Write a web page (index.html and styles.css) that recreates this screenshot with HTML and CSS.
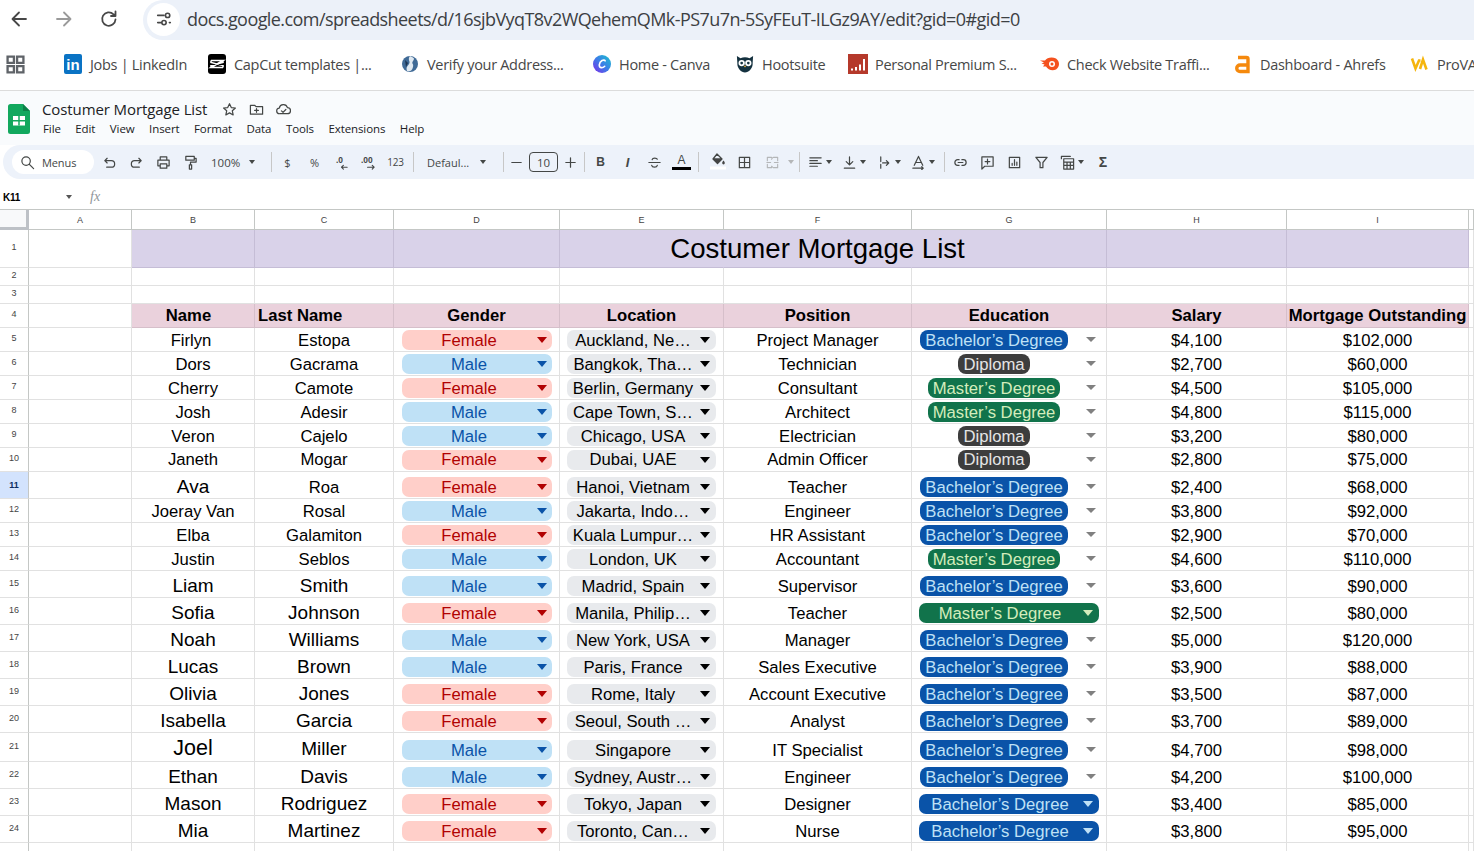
FILE: index.html
```html
<!DOCTYPE html>
<html lang="en">
<head>
<meta charset="utf-8">
<title>Costumer Mortgage List</title>
<link rel="stylesheet" href="styles.css">
</head>
<body>
<header class="nav">
  <svg class="nav-ico" viewBox="0 0 20 20"><path d="M17 10H4M10 3.500L3.500 10l6.500 6.500" class="st-d"/></svg>
  <svg class="nav-ico fwd" viewBox="0 0 20 20"><path d="M3 10h13M10 3.500l6.500 6.500-6.500 6.500" class="st-l"/></svg>
  <svg class="nav-ico rel" viewBox="0 0 20 20"><path d="M16.500 10.500a6.700 6.700 0 1 1-2-5.200L16.500 7M16.500 2.500V7H12" class="st-d"/></svg>
  <div class="addr">
    <span class="site"><svg viewBox="0 0 20 20" width="18" height="18"><path d="M3 6h7M3 14h4M16 14h1" class="st-d"/><circle cx="14" cy="6" r="2.400" class="st-d"/><circle cx="10" cy="14" r="2.400" class="st-d"/></svg></span>
    <span class="url">docs.google.com/spreadsheets/d/16sjbVyqT8v2WQehemQMk-PS7u7n-5SyFEuT-ILGz9AY/edit?gid=0#gid=0</span>
  </div>
</header>
<nav class="marks">
  <svg class="apps" viewBox="0 0 18 18"><path d="M1.500 1.500h6v6h-6zM10.500 1.500h6v6h-6zM1.500 10.500h6v6h-6zM10.500 10.500h6v6h-6z" class="st-a"/></svg>
  <span class="mark-sep"></span>
  <div class="mark-grid">
    <a class="mark"><span class="li">in</span>Jobs | LinkedIn</a>
    <a class="mark"><svg class="mi" viewBox="0 0 18 20"><rect width="18" height="20" rx="3" fill="#000"/><path d="M3 6.500h12L3 13.500h12M3 6.500v2L15 11.500v2M15 6.500v2L3 11.500v2" fill="none" stroke="#fff" stroke-width="1.600"/></svg>CapCut templates |...</a>
    <a class="mark"><svg class="mi" viewBox="0 0 18 20"><circle cx="9" cy="10" r="8" fill="#3f6a96"/><path d="M9 2c-3 4 1 5-1 8s-3 3-2 7c3 1 5 0 6-4s-2-3 0-6 1-3-3-5z" fill="#dfe8f0"/><path d="M4 6l3 3-2 4z" fill="#1c3552"/></svg>Verify your Address...</a>
    <a class="mark"><svg class="mi" viewBox="0 0 20 20"><defs><linearGradient id="cv" x1="0" y1="1" x2="1" y2="0"><stop offset="0" stop-color="#7d2ae8"/><stop offset=".5" stop-color="#3c7de8"/><stop offset="1" stop-color="#19c4cc"/></linearGradient></defs><circle cx="10" cy="10" r="10" fill="url(#cv)"/><path d="M13.500 6.500c-1-2-6-.5-6.500 4.500-.3 3.500 3.500 4 6 1.500" fill="none" stroke="#fff" stroke-width="1.800" stroke-linecap="round"/></svg>Home - Canva</a>
    <a class="mark"><svg class="mi" viewBox="0 0 20 20"><path d="M1 1l4 2.500c3-1.500 7-1.500 10 0L19 1l-.5 8c.5 6-4.500 10.500-8.500 10.500S1 15 1.500 9z" fill="#14313f"/><circle cx="6.300" cy="9" r="3.500" fill="#fff"/><circle cx="13.700" cy="9" r="3.500" fill="#fff"/><circle cx="6.300" cy="9" r="1.500" fill="#14313f"/><circle cx="13.700" cy="9" r="1.500" fill="#14313f"/><path d="M8.500 12h3L10 14z" fill="#f4b942"/></svg>Hootsuite</a>
    <a class="mark"><svg class="mi wide" viewBox="0 0 20 20"><rect width="20" height="20" fill="#b5392b"/><path d="M4 16.500v-2M8 16.500v-3.500M12 16.500v-6M16 16.500V5" stroke="#fff" stroke-width="2" fill="none"/></svg>Personal Premium S...</a>
    <a class="mark"><svg class="mi wide" viewBox="0 0 20 14"><path d="M0 3.500h5c2-3 7-4 11-2 4 3 4 8 0 11-4 2-8 0-10-3H3l1.500-2-3-1 2.500-1z" fill="#f4511e"/><circle cx="12" cy="7" r="3" fill="#fff"/><circle cx="12" cy="7" r="1.500" fill="#f4511e"/></svg>Check Website Traffi...</a>
    <a class="mark"><svg class="mi ah" viewBox="0 0 16 20"><path d="M3 3.500h8.500a1.500 1.500 0 0 1 1.500 1.500v12.500H5a3 3 0 0 1 0-6.500h8" fill="none" stroke="#f5890d" stroke-width="3.400"/></svg>Dashboard - Ahrefs</a>
    <a class="mark"><svg class="mi wide" viewBox="0 0 20 16"><path d="M2 2.500l3.500 10 3.500-8 1.500 0M10 13l3-9.500 3.500 10" fill="none" stroke="#f5b50d" stroke-width="2.600"/></svg>ProVA</a>
  </div>
</nav>
<section class="doc">
  <svg class="logo" viewBox="0 0 22 30"><path d="M2.500 0H15l7 7v20.500A2.500 2.500 0 0 1 19.500 30h-17A2.500 2.500 0 0 1 0 27.500v-25A2.500 2.500 0 0 1 2.500 0z" fill="#12a85e"/><path d="M15 0l7 7h-7z" fill="#0d8049"/><rect x="5" y="12" width="12" height="9.500" fill="#fff"/><path d="M5 16.800h12M11 12v9.500" fill="none" stroke="#12a85e" stroke-width="1.500"/></svg>
  <div class="doc-body">
    <div class="doc-title">
      <span class="title-text">Costumer Mortgage List</span>
      <svg class="t-ico first" viewBox="0 0 16 16"><path d="M8 1.800l1.900 4.100 4.400.5-3.300 3 .9 4.400L8 11.600l-3.900 2.200.9-4.400-3.300-3 4.400-.5z" class="st-t"/></svg>
      <svg class="t-ico" viewBox="0 0 16 16"><path d="M1.500 3.500h4.500l1.500 1.500h7v8h-13zM8 7v4M6 9h4" class="st-t"/></svg>
      <svg class="t-ico" viewBox="0 0 16 16"><path d="M4 12.500a3 3 0 0 1-.5-6 4.500 4.500 0 0 1 8.700-.5 3.200 3.200 0 0 1 0 6.500zM5.800 9.500L7.500 11l3-3" class="st-t"/></svg>
    </div>
    <div class="menu"><span>File</span><span>Edit</span><span>View</span><span>Insert</span><span>Format</span><span>Data</span><span>Tools</span><span>Extensions</span><span>Help</span></div>
  </div>
</section>
<section class="toolbar">
  <div class="search"><svg viewBox="0 0 16 16" width="15" height="15"><circle cx="6.500" cy="6.500" r="4.500" class="st-t"/><path d="M10 10l4.500 4.500" class="st-t"/></svg><span>Menus</span></div>
  <span class="tool"><svg viewBox="0 0 16 16"><path d="M5.500 3.500L3 6l2.500 2.500M3 6h7a3 3 0 0 1 0 7H5" class="st-t"/></svg></span>
  <span class="tool"><svg viewBox="0 0 16 16"><path d="M10.500 3.500L13 6l-2.500 2.500M13 6H6a3 3 0 0 0 0 7h5" class="st-t"/></svg></span>
  <span class="tool"><svg viewBox="0 0 16 16"><path d="M4.500 5V2h7v3M4.500 11.500H2V5.500h12v6h-2.500M4.500 9.500h7V14h-7z" class="st-t"/></svg></span>
  <span class="tool"><svg viewBox="0 0 16 16"><path d="M3 1.500h9v4H3zM12 3.500h2v4H8v3M6.800 10.500h2.400v4.500H6.800z" class="st-t"/></svg></span>
  <span class="zoom">100%<i class="caret"></i></span>
  <span class="sep s1"></span>
  <span class="tool tx">$</span><span class="tool tx">%</span>
  <span class="tool"><svg viewBox="0 0 16 16"><text x="2" y="9" class="dec">.0</text><path d="M14 13H8M10 11l-2 2 2 2" class="st-s"/></svg></span>
  <span class="tool"><svg viewBox="0 0 16 16"><text x="0" y="9" class="dec">.00</text><path d="M7 13h7M12 11l2 2-2 2" class="st-s"/></svg></span>
  <span class="tool tx small">123</span>
  <span class="sep s2"></span>
  <span class="font-pick">Defaul...<i class="caret"></i></span>
  <span class="sep s3"></span>
  <span class="tool t-minus"><svg viewBox="0 0 16 16"><path d="M3 8h10" class="st-t"/></svg></span>
  <span class="size">10</span>
  <span class="tool t-plus"><svg viewBox="0 0 16 16"><path d="M3 8h10M8 3v10" class="st-t"/></svg></span>
  <span class="sep s4"></span>
  <span class="tool tx bold">B</span>
  <span class="tool tx ital">I</span>
  <span class="tool"><svg viewBox="0 0 16 16"><path d="M2 8h12M11 4.500C10.500 3 6 2.500 5.500 5M5 11c.5 2.500 5.500 2.500 6 0" class="st-t"/></svg></span>
  <span class="tool"><span class="col-a">A</span></span>
  <span class="sep s5"></span>
  <span class="tool fill"><svg viewBox="0 0 16 18"><path d="M7 2l5 5-4.500 4.500L3 7zM3 7h9" class="st-t"/><path d="M3 7h9l-4.500 4.500z" fill="#444"/><path d="M13.500 8.500c1 1.300 1.300 2 1.300 2.600a1.300 1.300 0 0 1-2.600 0c0-.6.300-1.300 1.300-2.600z" fill="#444"/><path d="M0 16h16" stroke="#fff" stroke-width="3"/></svg></span>
  <span class="tool"><svg viewBox="0 0 16 16"><path d="M2.500 2.500h11v11h-11zM8 2.500v11M2.500 8h11" class="st-t"/></svg></span>
  <span class="tool merge"><svg viewBox="0 0 16 16"><path d="M2.500 6V2.500H7M9 2.500h4.500V6M2.500 10v3.500H7M9 13.500h4.500V10M2 8h4M10 8h4M7 4.500L8 3M7 12l1 1" class="st-g"/></svg></span>
  <i class="caret pale"></i>
  <span class="sep s6"></span>
  <span class="split"><svg viewBox="0 0 16 16"><path d="M2 3h12M2 6h8M2 9h12M2 12h8" class="st-t"/></svg><i class="caret"></i></span>
  <span class="split"><svg viewBox="0 0 16 16"><path d="M8 2v8M4.500 7L8 10.500 11.500 7M2.500 14h11" class="st-t"/></svg><i class="caret"></i></span>
  <span class="split"><svg viewBox="0 0 16 16"><path d="M4 2v5M4 10v4M6 8.500h6M10 6l2.500 2.500L10 11" class="st-t"/></svg><i class="caret"></i></span>
  <span class="split"><svg viewBox="0 0 16 16"><path d="M3.500 11L8 1.500 12.500 11M5 8h6M2 14h11M11.500 12.500L13 14l-1.500 1.500" class="st-t"/></svg><i class="caret"></i></span>
  <span class="sep s7"></span>
  <span class="tool"><svg viewBox="0 0 16 16"><path d="M6.500 5H5a3 3 0 0 0 0 6h1.500M9.500 5H11a3 3 0 0 1 0 6H9.500M5.500 8h5" class="st-t"/></svg></span>
  <span class="tool"><svg viewBox="0 0 16 16"><path d="M2 2h12v10H5l-3 3zM8 4.500v5M5.500 7h5" class="st-t"/></svg></span>
  <span class="tool"><svg viewBox="0 0 16 16"><path d="M2.500 2.500h11v11h-11zM5.500 11V9M8 11V5M10.500 11V7.500" class="st-t"/></svg></span>
  <span class="tool"><svg viewBox="0 0 16 16"><path d="M2 2.500h12L9.500 8v5.500h-3V8z" class="st-t"/></svg></span>
  <span class="split"><svg viewBox="0 0 16 16"><path d="M1.500 4V1.500H11M4 4h10.500v11H4zM4 7.500h10.500M7.500 7.500V15M11 7.500V15M4 11h10.500" class="st-t"/></svg><i class="caret"></i></span>
  <span class="tool sigma">Σ</span>
</section>
<section class="fbar">
  <span class="cellref">K11</span><i class="caret dark"></i><span class="fx">fx</span>
</section>
<main class="sheet">
  <div class="row colhead"><div class="corner"></div><div>A</div><div>B</div><div>C</div><div>D</div><div>E</div><div>F</div><div>G</div><div>H</div><div>I</div><div></div></div>
  <div class="row h38 band-title"><div class="rh">1</div><div class="c"></div><div class="c b"></div><div class="c b"></div><div class="c b"></div><div class="c b nr"></div><div class="c b nr title">Costumer Mortgage List</div><div class="c b"></div><div class="c b"></div><div class="c b"></div><div class="c"></div></div>
  <div class="row h18"><div class="rh">2</div><div class="c"></div><div class="c"></div><div class="c"></div><div class="c"></div><div class="c"></div><div class="c"></div><div class="c"></div><div class="c"></div><div class="c"></div><div class="c"></div></div>
  <div class="row h18"><div class="rh">3</div><div class="c"></div><div class="c"></div><div class="c"></div><div class="c"></div><div class="c"></div><div class="c"></div><div class="c"></div><div class="c"></div><div class="c"></div><div class="c"></div></div>
  <div class="row h24 band-head"><div class="rh">4</div><div class="c"></div><div class="c b off-name">Name</div><div class="c b left">Last Name</div><div class="c b">Gender</div><div class="c b">Location</div><div class="c b">Position</div><div class="c b">Education</div><div class="c b">Salary</div><div class="c b">Mortgage Outstanding</div><div class="c"></div></div>

  <div class="row h24"><div class="rh">5</div><div class="c"></div><div class="c off-first">Firlyn</div><div class="c">Estopa</div><div class="c"><span class="pill fem">Female<i></i></span></div><div class="c"><span class="pill loc">Auckland, Ne…<i></i></span></div><div class="c">Project Manager</div><div class="c edu"><span class="bub ba">Bachelor’s Degree</span><i></i></div><div class="c">$4,100</div><div class="c">$102,000</div><div class="c"></div></div>
  <div class="row h24"><div class="rh">6</div><div class="c"></div><div class="c">Dors</div><div class="c">Gacrama</div><div class="c"><span class="pill mal">Male<i></i></span></div><div class="c"><span class="pill loc">Bangkok, Tha…<i></i></span></div><div class="c">Technician</div><div class="c edu"><span class="bub di">Diploma</span><i></i></div><div class="c">$2,700</div><div class="c">$60,000</div><div class="c"></div></div>
  <div class="row h24"><div class="rh">7</div><div class="c"></div><div class="c">Cherry</div><div class="c">Camote</div><div class="c"><span class="pill fem">Female<i></i></span></div><div class="c"><span class="pill loc">Berlin, Germany<i></i></span></div><div class="c">Consultant</div><div class="c edu"><span class="bub ma">Master’s Degree</span><i></i></div><div class="c">$4,500</div><div class="c">$105,000</div><div class="c"></div></div>
  <div class="row h24"><div class="rh">8</div><div class="c"></div><div class="c">Josh</div><div class="c">Adesir</div><div class="c"><span class="pill mal">Male<i></i></span></div><div class="c"><span class="pill loc">Cape Town, S…<i></i></span></div><div class="c">Architect</div><div class="c edu"><span class="bub ma">Master’s Degree</span><i></i></div><div class="c">$4,800</div><div class="c">$115,000</div><div class="c"></div></div>
  <div class="row h24"><div class="rh">9</div><div class="c"></div><div class="c">Veron</div><div class="c">Cajelo</div><div class="c"><span class="pill mal">Male<i></i></span></div><div class="c"><span class="pill loc">Chicago, USA<i></i></span></div><div class="c">Electrician</div><div class="c edu"><span class="bub di">Diploma</span><i></i></div><div class="c">$3,200</div><div class="c">$80,000</div><div class="c"></div></div>
  <div class="row h24 raised"><div class="rh">10</div><div class="c"></div><div class="c">Janeth</div><div class="c">Mogar</div><div class="c"><span class="pill fem">Female<i></i></span></div><div class="c"><span class="pill loc">Dubai, UAE<i></i></span></div><div class="c">Admin Officer</div><div class="c edu"><span class="bub di">Diploma</span><i></i></div><div class="c">$2,800</div><div class="c">$75,000</div><div class="c"></div></div>
  <div class="row h27"><div class="rh sel">11</div><div class="c"></div><div class="c big">Ava</div><div class="c">Roa</div><div class="c"><span class="pill fem">Female<i></i></span></div><div class="c"><span class="pill loc">Hanoi, Vietnam<i></i></span></div><div class="c">Teacher</div><div class="c edu"><span class="bub ba">Bachelor’s Degree</span><i></i></div><div class="c">$2,400</div><div class="c">$68,000</div><div class="c"></div></div>
  <div class="row h24"><div class="rh">12</div><div class="c"></div><div class="c">Joeray Van</div><div class="c">Rosal</div><div class="c"><span class="pill mal">Male<i></i></span></div><div class="c"><span class="pill loc">Jakarta, Indo…<i></i></span></div><div class="c">Engineer</div><div class="c edu"><span class="bub ba">Bachelor’s Degree</span><i></i></div><div class="c">$3,800</div><div class="c">$92,000</div><div class="c"></div></div>
  <div class="row h24"><div class="rh">13</div><div class="c"></div><div class="c">Elba</div><div class="c">Galamiton</div><div class="c"><span class="pill fem">Female<i></i></span></div><div class="c"><span class="pill loc">Kuala Lumpur…<i></i></span></div><div class="c">HR Assistant</div><div class="c edu"><span class="bub ba">Bachelor’s Degree</span><i></i></div><div class="c">$2,900</div><div class="c">$70,000</div><div class="c"></div></div>
  <div class="row h24"><div class="rh">14</div><div class="c"></div><div class="c">Justin</div><div class="c">Seblos</div><div class="c"><span class="pill mal">Male<i></i></span></div><div class="c"><span class="pill loc">London, UK<i></i></span></div><div class="c">Accountant</div><div class="c edu"><span class="bub ma">Master’s Degree</span><i></i></div><div class="c">$4,600</div><div class="c">$110,000</div><div class="c"></div></div>
  <div class="row h27"><div class="rh">15</div><div class="c"></div><div class="c big">Liam</div><div class="c big">Smith</div><div class="c"><span class="pill mal">Male<i></i></span></div><div class="c"><span class="pill loc">Madrid, Spain<i></i></span></div><div class="c">Supervisor</div><div class="c edu"><span class="bub ba">Bachelor’s Degree</span><i></i></div><div class="c">$3,600</div><div class="c">$90,000</div><div class="c"></div></div>
  <div class="row h27"><div class="rh">16</div><div class="c"></div><div class="c big">Sofia</div><div class="c big">Johnson</div><div class="c"><span class="pill fem">Female<i></i></span></div><div class="c"><span class="pill loc">Manila, Philip…<i></i></span></div><div class="c">Teacher</div><div class="c"><span class="pill wide ma">Master’s Degree<i></i></span></div><div class="c">$2,500</div><div class="c">$80,000</div><div class="c"></div></div>
  <div class="row h27"><div class="rh">17</div><div class="c"></div><div class="c big">Noah</div><div class="c big">Williams</div><div class="c"><span class="pill mal">Male<i></i></span></div><div class="c"><span class="pill loc">New York, USA<i></i></span></div><div class="c">Manager</div><div class="c edu"><span class="bub ba">Bachelor’s Degree</span><i></i></div><div class="c">$5,000</div><div class="c">$120,000</div><div class="c"></div></div>
  <div class="row h27"><div class="rh">18</div><div class="c"></div><div class="c big">Lucas</div><div class="c big">Brown</div><div class="c"><span class="pill mal">Male<i></i></span></div><div class="c"><span class="pill loc">Paris, France<i></i></span></div><div class="c">Sales Executive</div><div class="c edu"><span class="bub ba">Bachelor’s Degree</span><i></i></div><div class="c">$3,900</div><div class="c">$88,000</div><div class="c"></div></div>
  <div class="row h27"><div class="rh">19</div><div class="c"></div><div class="c big">Olivia</div><div class="c big">Jones</div><div class="c"><span class="pill fem">Female<i></i></span></div><div class="c"><span class="pill loc">Rome, Italy<i></i></span></div><div class="c">Account Executive</div><div class="c edu"><span class="bub ba">Bachelor’s Degree</span><i></i></div><div class="c">$3,500</div><div class="c">$87,000</div><div class="c"></div></div>
  <div class="row h27"><div class="rh">20</div><div class="c"></div><div class="c big">Isabella</div><div class="c big">Garcia</div><div class="c"><span class="pill fem">Female<i></i></span></div><div class="c"><span class="pill loc">Seoul, South …<i></i></span></div><div class="c">Analyst</div><div class="c edu"><span class="bub ba">Bachelor’s Degree</span><i></i></div><div class="c">$3,700</div><div class="c">$89,000</div><div class="c"></div></div>
  <div class="row h29"><div class="rh">21</div><div class="c"></div><div class="c huge">Joel</div><div class="c big lift">Miller</div><div class="c"><span class="pill mal">Male<i></i></span></div><div class="c"><span class="pill loc">Singapore<i></i></span></div><div class="c">IT Specialist</div><div class="c edu"><span class="bub ba">Bachelor’s Degree</span><i></i></div><div class="c">$4,700</div><div class="c">$98,000</div><div class="c"></div></div>
  <div class="row h27"><div class="rh">22</div><div class="c"></div><div class="c big">Ethan</div><div class="c big">Davis</div><div class="c"><span class="pill mal">Male<i></i></span></div><div class="c"><span class="pill loc">Sydney, Austr…<i></i></span></div><div class="c">Engineer</div><div class="c edu"><span class="bub ba">Bachelor’s Degree</span><i></i></div><div class="c">$4,200</div><div class="c">$100,000</div><div class="c"></div></div>
  <div class="row h27"><div class="rh">23</div><div class="c"></div><div class="c big">Mason</div><div class="c big">Rodriguez</div><div class="c"><span class="pill fem">Female<i></i></span></div><div class="c"><span class="pill loc">Tokyo, Japan<i></i></span></div><div class="c">Designer</div><div class="c"><span class="pill wide ba">Bachelor’s Degree<i></i></span></div><div class="c">$3,400</div><div class="c">$85,000</div><div class="c"></div></div>
  <div class="row h27"><div class="rh">24</div><div class="c"></div><div class="c big">Mia</div><div class="c big">Martinez</div><div class="c"><span class="pill fem">Female<i></i></span></div><div class="c"><span class="pill loc">Toronto, Can…<i></i></span></div><div class="c">Nurse</div><div class="c"><span class="pill wide ba">Bachelor’s Degree<i></i></span></div><div class="c">$3,800</div><div class="c">$95,000</div><div class="c"></div></div>
  <div class="row h27"><div class="rh">25</div><div class="c"></div><div class="c"></div><div class="c"></div><div class="c"></div><div class="c"></div><div class="c"></div><div class="c"></div><div class="c"></div><div class="c"></div><div class="c"></div></div>
</main>
</body>
</html>
```
FILE: styles.css
```css
* { box-sizing: border-box; }
html, body { margin: 0; height: 851px; overflow: hidden; background: #fff; }
body { font-family: "Liberation Sans", Arial, sans-serif; color: #000; }
svg { display: block; flex: none; }
i { font-style: normal; }

.st-d, .st-l, .st-t, .st-s, .st-g, .st-a { fill: none; stroke-linecap: round; stroke-linejoin: round; }
.st-d { stroke: #474747; stroke-width: 1.8; }
.st-a { stroke: #5f6368; stroke-width: 2.2; stroke-linecap: butt; stroke-linejoin: miter; }
.st-l { stroke: #9a9a9a; stroke-width: 1.8; }
.st-t { stroke: #444746; stroke-width: 1.3; }
.st-s { stroke: #444746; stroke-width: 1.2; }
.st-g { stroke: #b4b6b8; stroke-width: 1.2; }

/* browser chrome */
.nav { height: 40px; display: flex; align-items: center; padding-left: 9px; background: #fff; }
.nav-ico { width: 20px; height: 20px; margin-top: -3px; }
.nav-ico.fwd { margin-left: 25px; }
.nav-ico.rel { margin-left: 25px; }
.addr { margin-left: 24px; flex: 1; height: 40px; background: #ecf1f9; border-radius: 20px 0 0 20px; display: flex; align-items: center; padding-left: 4px; }
.site { width: 33px; height: 33px; border-radius: 50%; background: #fff; display: flex; align-items: center; justify-content: center; margin-top: -2px; }
.url { margin-left: 7px; font: 18px "Open Sans", sans-serif; letter-spacing: -.57px; color: #3c4043; white-space: nowrap; margin-top: -3px; }

.marks { height: 51px; border-bottom: 1px solid #dcdcdc; display: flex; align-items: center; padding-left: 6px; padding-bottom: 2px; overflow: hidden; }
.apps { width: 19px; height: 19px; }
.mark-sep { width: 2px; height: 20px; background: #d3e0f3; margin-left: 19px; margin-right: 20px; }
.mark-grid { display: grid; grid-template-columns: 144px 193px 192px 143px 112px 192px 195px 175px 100px; }
.mark { display: flex; align-items: center; gap: 8px; font: 14.5px "Open Sans", sans-serif; letter-spacing: -.3px; color: #474747; white-space: nowrap; }
.mi { width: 18px; height: 20px; }
.mi.wide { width: 20px; margin-right: -1px; }
.mi.ah { width: 16px; margin-right: 1px; }
.li { width: 18px; height: 20px; background: #0a73c4; color: #fff; font: bold 15px "Liberation Sans", sans-serif; letter-spacing: 0; display: flex; align-items: flex-end; justify-content: center; border-radius: 2px; line-height: 18px; }

/* doc header */
.doc { height: 54px; background: #f9fbfd; display: flex; padding: 13px 0 0 8px; }
.logo { width: 22px; height: 30px; }
.doc-body { margin-left: 12px; margin-top: -4px; }
.doc-title { display: flex; align-items: center; height: 18px; }
.title-text { font: 15px "Open Sans", sans-serif; letter-spacing: -.1px; color: #202124; }
.t-ico { width: 15px; height: 15px; margin-left: 12px; }
.t-ico.first { margin-left: 15px; }
.menu { display: flex; gap: 14.5px; margin-top: 3px; padding-left: 1px; font: 11.5px "Open Sans", sans-serif; letter-spacing: -.1px; color: #202124; }

/* toolbar */
.toolbar { height: 34px; margin-left: 3px; background: #edf2fa; border-radius: 17px 0 0 17px; display: flex; align-items: center; padding-left: 9px; color: #444746; font-size: 11px; }
.search { width: 82px; height: 24px; background: #fff; border-radius: 12px; display: flex; align-items: center; padding-left: 8px; gap: 7px; font: 11px "Open Sans", sans-serif; letter-spacing: -.1px; margin-right: 2px; }
.tool { width: 27px; height: 24px; display: flex; align-items: center; justify-content: center; flex: none; }
.tool svg { width: 15px; height: 15px; }
.tool.fill svg { width: 16px; height: 18px; margin-top: -2px; }
.tool.tx { font: 11px "Open Sans", sans-serif; }
.tool.small { font-size: 10px; letter-spacing: -.3px; }
.tool.bold { font: bold 12px "Liberation Sans", sans-serif; }
.tool.ital { font: italic bold 13px "Liberation Sans", sans-serif; }
.tool.merge { margin-left: 1px; }
.dec { font: bold 9px "Liberation Sans", sans-serif; fill: #444746; }
.caret { display: block; width: 0; height: 0; border-left: 3.5px solid transparent; border-right: 3.5px solid transparent; border-top: 4px solid #444746; flex: none; }
.caret.pale { border-top-color: #b4b6b8; margin-left: 2px; }
.caret.dark { margin-left: 49px; border-top-color: #555; }
.zoom { width: 60px; display: flex; align-items: center; padding-left: 7px; font: 11.5px "Open Sans", sans-serif; }
.zoom .caret { margin-left: 9px; }
.font-pick { width: 84px; display: flex; align-items: center; padding-left: 13px; font: 11px "Open Sans", sans-serif; }
.font-pick .caret { margin-left: 11px; }
.sep { width: 1px; height: 20px; background: #c7c7c7; flex: none; }
.s1 { margin: 0 2px 0 7px; }
.s2 { margin-left: 4px; }
.s3 { margin: 0 0 0 5px; }
.s4 { margin: 0 2px 0 2px; }
.s5 { margin: 0 5px 0 3px; }
.s6 { margin: 0 3px 0 5px; }
.s7 { margin: 0 2px 0 4px; }
.tool.t-minus { width: 25px; }
.tool.t-plus { width: 24px; }
.size { width: 29px; height: 20px; border: 1px solid #444746; border-radius: 4px; display: flex; align-items: center; justify-content: center; font: 11.5px "Open Sans", sans-serif; flex: none; }
.col-a { width: 19px; border-bottom: 3px solid #000; font: 12px "Liberation Sans", sans-serif; text-align: center; line-height: 13px; }
.split { width: 34.3px; height: 24px; display: flex; align-items: center; justify-content: center; gap: 3px; flex: none; }
.split svg { width: 15px; height: 15px; }
.sigma { font: bold 14px "Liberation Sans", sans-serif; }

/* formula bar */
.fbar { height: 31px; padding: 6px 0 0 3px; display: flex; align-items: center; border-bottom: 1px solid #c4c7c5; }
.cellref { font: bold 10px "Liberation Sans", sans-serif; letter-spacing: -.3px; width: 14px; }
.fx { margin-left: 18px; font: italic 14px "Liberation Serif", serif; color: #8f959a; }

/* sheet */
.row { display: grid; grid-template-columns: 29px 103px 123px 139px 166px 164px 188px 195px 180px 182px 1fr; font-size: 16.67px; }
.colhead { height: 20px; font-size: 9px; color: #444; }
.colhead > div { display: flex; align-items: center; justify-content: center; border-right: 1px solid #c4c7c5; border-bottom: 1px solid #c4c7c5; }
.colhead .corner { background: #f8f9fa; border-right: 3px solid #bdc1c6; border-bottom: 3px solid #bdc1c6; }
.h18 { height: 18px; } .h24 { height: 24px; } .h27 { height: 27px; } .h29 { height: 29px; } .h38 { height: 38px; }
.rh { display: flex; align-items: center; justify-content: center; font-size: 9px; color: #444; border-right: 1px solid #c4c7c5; border-bottom: 1px solid #e1e1e1; padding-bottom: 3px; }
.rh.sel { background: #d3e3fd; font-weight: bold; color: #0b2e63; padding-bottom: 0; }
.c { display: flex; align-items: flex-end; justify-content: center; white-space: nowrap; line-height: 20px; border-right: 1px solid #e1e1e1; border-bottom: 1px solid #e1e1e1; min-width: 0; }
.c.left { justify-content: flex-start; padding-left: 3px; }
.off-name { padding-right: 9px; }
.off-first { padding-right: 4px; }
.big { font-size: 19px; padding-bottom: 1px; }
.big.lift { padding-bottom: 2px; }
.huge { font-size: 21.5px; padding-bottom: 3px; }
.raised .c { padding-bottom: 1px; }
.raised .pill, .raised .bub { margin-bottom: 0; padding-top: 0; line-height: 20px; }

.band-title .b { background: #d9d2e9; border-color: #c5bdd6; }
.band-title .nr { border-right-color: #d9d2e9; }
.title { font-size: 27.6px; align-items: center; padding-top: 1px; position: relative; z-index: 1; }
.band-head .b { background: #ead1dc; border-color: #d6bfca; font-weight: bold; padding-bottom: 1px; }

.pill { position: relative; height: 20px; width: 150px; border-radius: 7px; display: flex; align-items: center; justify-content: center; padding: 2px 16px 0 0; margin-bottom: 1px; flex: none; }
.pill i { position: absolute; right: 5px; top: 7px; width: 0; height: 0; border-left: 5.5px solid transparent; border-right: 5.5px solid transparent; border-top: 6px solid currentColor; }
.pill.fem { background: #ffcfc9; color: #b10202; margin-left: 1px; }
.pill.mal { background: #bfe1f6; color: #0a53a8; margin-left: 1px; }
.pill.loc { background: #e8eaed; color: #000; width: 149px; padding-right: 17px; }
.pill.loc i { right: 6px; }
.pill.wide { width: 180px; padding-right: 18px; }
.pill.wide.ma { background: #11734b; color: #d4edbc; }
.pill.wide.ba { background: #0a53a8; color: #bfe1f6; }
.pill.wide i { right: 6px; }

.edu { padding-right: 30px; position: relative; }
.bub { height: 20px; line-height: 22px; border-radius: 8px; padding: 0 5px; margin-bottom: 1px; }
.bub.ba { background: #0a53a8; color: #bfe1f6; }
.bub.ma { background: #11734b; color: #d4edbc; }
.bub.di { background: #3d3d3d; color: #e5e5e5; }
.edu i { position: absolute; right: 10px; bottom: 9px; width: 0; height: 0; border-left: 5px solid transparent; border-right: 5px solid transparent; border-top: 5px solid #808080; }
```
